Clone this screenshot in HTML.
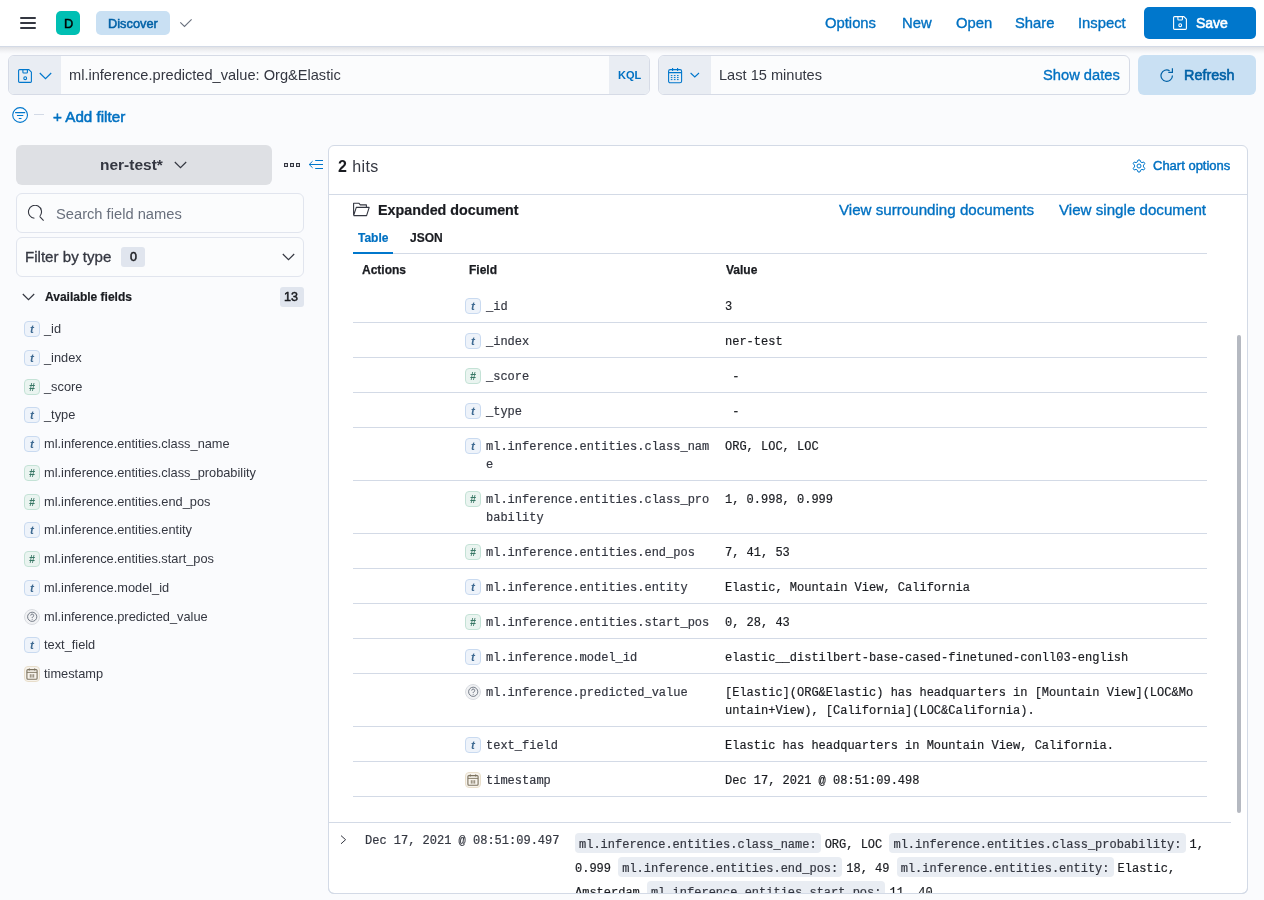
<!DOCTYPE html>
<html><head><meta charset="utf-8"><style>
*{margin:0;padding:0}
html,body{width:1264px;height:900px;overflow:hidden;background:#FAFBFD;font-family:"Liberation Sans",sans-serif;}
.t{position:absolute;white-space:nowrap;will-change:transform;}
.b{position:absolute;}
.tok{position:absolute;width:16px;height:16px;box-sizing:border-box;border-radius:4px;border:1px solid;}
.tok{will-change:transform}.tok i{position:absolute;left:0;top:0;width:14px;text-align:center;font-style:italic;font-weight:700;font-size:11px;line-height:14px;font-family:"Liberation Sans",sans-serif;}
.tt{background:#EEF3FA;border-color:#C9DAF0;}
.tt i{color:#3E6A92;font-size:11.5px;}
.tn{background:#EAF4F0;border-color:#C4E2D6;}
.tn i{color:#387765;font-family:"Liberation Sans",sans-serif;font-size:10.5px;top:-0.5px;}
.tq{background:#F1F2F4;border-color:#D9DCE1;border-radius:50%;}
.td{background:#F7F3EC;border-color:#E8DECB;}
.src{-webkit-text-stroke:0.2px #1A1C21;will-change:transform;position:absolute;font-family:"Liberation Mono",monospace;font-size:12px;line-height:24px;color:#1A1C21;height:60px;overflow:hidden;}
.dt{background:#E9EDF3;border-radius:4px;padding:5px 4px 1px;margin-right:4px;color:#343741;-webkit-text-stroke:0.2px #343741;}
.dd{}
</style></head><body>
<div class="b" style="left:0px;top:0px;width:1264px;height:46px;background:#fff;"></div>
<div class="b" style="left:0px;top:46px;width:1264px;height:1px;background:#D3DAE6;"></div>
<div class="b" style="left:0;top:47px;width:1264px;height:7px;background:linear-gradient(rgba(60,60,70,.13),rgba(60,60,70,.04) 60%,rgba(60,60,70,0));"></div>
<div class="b" style="left:20px;top:17px;width:16px;height:2px;background:#343741;border-radius:1px;"></div>
<div class="b" style="left:20px;top:22px;width:16px;height:2px;background:#343741;border-radius:1px;"></div>
<div class="b" style="left:20px;top:27px;width:16px;height:2px;background:#343741;border-radius:1px;"></div>
<div class="b" style="left:56px;top:11px;width:24px;height:24px;background:#00BFB3;border-radius:5px;"></div>
<div class="t" style="left:64px;top:15.66px;font-size:12.8px;line-height:15px;font-weight:400;color:#000;-webkit-text-stroke:0.45px #000;">D</div>
<div class="b" style="left:96px;top:11px;width:74px;height:24px;background:#C9E0F3;border-radius:5px;"></div>
<div class="t" style="left:108.4px;top:16.06px;font-size:12.8px;line-height:15px;font-weight:400;color:#0061A6;-webkit-text-stroke:0.5px #0061A6;">Discover</div>
<svg class="b" style="left:179px;top:17px" width="14" height="12" viewBox="0 0 14 12"><path d="M1.3 5.3 L5.5 9.4 L12.6 2.3" fill="none" stroke="#69707D" stroke-width="1.1"/></svg>
<div class="t" style="left:825px;top:14.47px;font-size:14.8px;line-height:18px;font-weight:400;color:#0071C2;-webkit-text-stroke:0.35px #0071C2;">Options</div>
<div class="t" style="left:902px;top:14.47px;font-size:14.8px;line-height:18px;font-weight:400;color:#0071C2;-webkit-text-stroke:0.35px #0071C2;">New</div>
<div class="t" style="left:955.6px;top:14.47px;font-size:14.8px;line-height:18px;font-weight:400;color:#0071C2;-webkit-text-stroke:0.35px #0071C2;">Open</div>
<div class="t" style="left:1015.4px;top:14.47px;font-size:14.8px;line-height:18px;font-weight:400;color:#0071C2;-webkit-text-stroke:0.35px #0071C2;">Share</div>
<div class="t" style="left:1078.3px;top:14.47px;font-size:14.8px;line-height:18px;font-weight:400;color:#0071C2;-webkit-text-stroke:0.35px #0071C2;">Inspect</div>
<div class="b" style="left:1144px;top:7px;width:112px;height:32px;background:#0077CC;border-radius:5px;"></div>
<svg class="b" style="left:1173px;top:16px" width="15" height="15" viewBox="0 0 15 15"><path d="M0.6 1.6 Q0.6 0.6 1.6 0.6 H10.9 L13.4 3.1 V12.5 Q13.4 13.4 12.5 13.4 H1.6 Q0.6 13.4 0.6 12.5 Z" fill="none" stroke="#fff" stroke-width="1.1" stroke-linejoin="round"/><path d="M4.9 0.6 V3.2 Q4.9 4 5.7 4 H8.6 Q9.4 4 9.4 3.2 V0.6" fill="none" stroke="#fff" stroke-width="1.1"/><circle cx="7.2" cy="9.2" r="1.4" fill="none" stroke="#fff" stroke-width="1.1"/></svg>
<div class="t" style="left:1196px;top:14.65px;font-size:14px;line-height:17px;font-weight:400;color:#fff;-webkit-text-stroke:0.6px #fff;">Save</div>
<div class="b" style="left:8px;top:55px;width:642px;height:40px;background:#FBFCFD;border:1px solid #D6DBE6;border-radius:6px;box-sizing:border-box;"></div>
<div class="b" style="left:9px;top:56px;width:52px;height:38px;background:#E9EDF3;border-radius:5px 0 0 5px;"></div>
<div class="b" style="left:609px;top:56px;width:40px;height:38px;background:#E9EDF3;border-radius:0 5px 5px 0;"></div>
<svg class="b" style="left:18px;top:69px" width="15" height="15" viewBox="0 0 15 15"><path d="M0.6 1.6 Q0.6 0.6 1.6 0.6 H10.9 L13.4 3.1 V12.5 Q13.4 13.4 12.5 13.4 H1.6 Q0.6 13.4 0.6 12.5 Z" fill="none" stroke="#0077CC" stroke-width="1.1" stroke-linejoin="round"/><path d="M4.9 0.6 V3.2 Q4.9 4 5.7 4 H8.6 Q9.4 4 9.4 3.2 V0.6" fill="none" stroke="#0077CC" stroke-width="1.1"/><circle cx="7.2" cy="9.2" r="1.4" fill="none" stroke="#0077CC" stroke-width="1.1"/></svg>
<svg class="b" style="left:39px;top:72px" width="13" height="8" viewBox="0 0 13 8"><path d="M0.8 1 L6.5 6.6 L12.2 1" fill="none" stroke="#0077CC" stroke-width="1.2"/></svg>
<div class="t" style="left:69.4px;top:65.94px;font-size:14.6px;line-height:18px;font-weight:400;color:#343741;">ml.inference.predicted_value: Org&amp;Elastic</div>
<div class="t" style="left:617.8px;top:69.49px;font-size:11px;line-height:13px;font-weight:700;color:#0071C2;">KQL</div>
<div class="b" style="left:658px;top:55px;width:472px;height:40px;background:#FBFCFD;border:1px solid #D6DBE6;border-radius:6px;box-sizing:border-box;"></div>
<div class="b" style="left:659px;top:56px;width:52px;height:38px;background:#E9EDF3;border-radius:5px 0 0 5px;"></div>
<svg class="b" style="left:668px;top:67px" width="15" height="17" viewBox="0 0 15 17"><rect x="0.6" y="2.6" width="13" height="13.2" rx="1.6" fill="none" stroke="#0077CC" stroke-width="1.1"/><path d="M0.6 5.6 H13.6 M4.6 1 V4 M9.6 1 V4" stroke="#0077CC" stroke-width="1.1"/><path d="M2.8 8.6 h1.6 M5.9 8.6 h1.6 M9 8.6 h1.6 M2.8 10.6 h1.6 M5.9 10.6 h1.6 M9 10.6 h1.6 M2.8 12.6 h1.6 M5.9 12.6 h1.6 M9 12.6 h1.6" stroke="#0077CC" stroke-width="1"/></svg>
<svg class="b" style="left:690px;top:72px" width="10" height="7" viewBox="0 0 10 7"><path d="M0.6 1 L4.8 5 L9 1" fill="none" stroke="#0077CC" stroke-width="1.1"/></svg>
<div class="t" style="left:719.2px;top:66.14px;font-size:14.6px;line-height:18px;font-weight:400;color:#343741;">Last 15 minutes</div>
<div class="t" style="left:1043.3px;top:65.91px;font-size:14.7px;line-height:18px;font-weight:400;color:#0071C2;-webkit-text-stroke:0.35px #0071C2;">Show dates</div>
<div class="b" style="left:1138px;top:55px;width:118px;height:40px;background:#C9E0F3;border-radius:6px;"></div>
<svg class="b" style="left:1160px;top:68px" width="14" height="14" viewBox="0 0 14 14"><path d="M9.6 2.7 A5.7 5.7 0 1 0 12.4 7.4" fill="none" stroke="#0061A6" stroke-width="1.2"/><path d="M12.4 0.2 V4.3 H8.3" fill="none" stroke="#0061A6" stroke-width="1.2"/></svg>
<div class="t" style="left:1183.6px;top:66.51px;font-size:14.4px;line-height:17px;font-weight:400;color:#0061A6;-webkit-text-stroke:0.6px #0061A6;">Refresh</div>
<svg class="b" style="left:12px;top:107px" width="17" height="17" viewBox="0 0 17 17"><circle cx="8.1" cy="8" r="7.4" fill="none" stroke="#0077CC" stroke-width="1.1"/><path d="M3.5 5.6 H12.8 M5.4 8.5 H10.9 M7.2 11.5 H9.1" stroke="#0077CC" stroke-width="1.1" stroke-linecap="round"/></svg>
<div class="b" style="left:34px;top:114px;width:10px;height:1px;background:#D3DAE6;"></div>
<div class="t" style="left:53px;top:107.83px;font-size:15.2px;line-height:18px;font-weight:400;color:#0071C2;-webkit-text-stroke:0.55px #0071C2;">+ Add filter</div>
<div class="b" style="left:16px;top:145px;width:256px;height:40px;background:#DEE0E4;border-radius:6px;"></div>
<div class="t" style="left:100.3px;top:154.63px;font-size:15.5px;line-height:19px;font-weight:700;color:#343741;">ner-test*</div>
<svg class="b" style="left:174px;top:161px" width="13" height="8" viewBox="0 0 13 8"><path d="M0.8 1 L6.5 6.6 L12.2 1" fill="none" stroke="#343741" stroke-width="1.2"/></svg>
<svg class="b" style="left:284px;top:163px" width="17" height="5" viewBox="0 0 17 5"><rect x="0.55" y="0.55" width="2.9" height="2.9" fill="none" stroke="#343741" stroke-width="1.1"/><rect x="6.55" y="0.55" width="2.9" height="2.9" fill="none" stroke="#343741" stroke-width="1.1"/><rect x="12.55" y="0.55" width="2.9" height="2.9" fill="none" stroke="#343741" stroke-width="1.1"/></svg>
<svg class="b" style="left:308px;top:158px" width="16" height="14" viewBox="0 0 16 14"><path d="M4.6 3.2 L1.2 6.5 L4.6 9.8 M1.2 6.5 H15 M7.2 2.5 H15 M7.2 10.5 H15" fill="none" stroke="#0077CC" stroke-width="1"/></svg>
<div class="b" style="left:16px;top:193px;width:288px;height:40px;background:#FBFCFD;border:1px solid #E1E5EE;border-radius:6px;box-sizing:border-box;"></div>
<svg class="b" style="left:27px;top:205px" width="18" height="17" viewBox="0 0 18 17"><path d="M7.43 13.28 A6.5 6.5 0 1 1 12.98 10.98" fill="none" stroke="#343741" stroke-width="1.1"/><path d="M12.6 11.3 L16.6 15.6" stroke="#343741" stroke-width="1.1"/></svg>
<div class="t" style="left:56.2px;top:205.11px;font-size:14.7px;line-height:18px;font-weight:400;color:#69707D;">Search field names</div>
<div class="b" style="left:16px;top:237px;width:288px;height:40px;background:#FBFCFD;border:1px solid #E1E5EE;border-radius:6px;box-sizing:border-box;"></div>
<div class="t" style="left:25.3px;top:247.97px;font-size:15.1px;line-height:18px;font-weight:400;color:#343741;-webkit-text-stroke:0.3px #343741;">Filter by type</div>
<div class="b" style="left:121px;top:247px;width:24px;height:20px;background:#E0E5EE;border-radius:3px;"></div>
<div class="t" style="left:129.5px;top:249.67px;font-size:12.5px;line-height:15px;font-weight:400;color:#1A1C21;-webkit-text-stroke:0.5px #1A1C21;">0</div>
<svg class="b" style="left:282px;top:253px" width="13" height="8" viewBox="0 0 13 8"><path d="M0.8 1 L6.5 6.6 L12.2 1" fill="none" stroke="#343741" stroke-width="1.2"/></svg>
<svg class="b" style="left:22px;top:293px" width="13" height="8" viewBox="0 0 13 8"><path d="M0.8 1 L6.5 6.6 L12.2 1" fill="none" stroke="#343741" stroke-width="1.2"/></svg>
<div class="t" style="left:44.8px;top:290.34px;font-size:12px;line-height:14px;font-weight:700;color:#1A1C21;-webkit-text-stroke:0.2px #1A1C21;">Available fields</div>
<div class="b" style="left:280px;top:287px;width:24px;height:20px;background:#E0E5EE;border-radius:3px;"></div>
<div class="t" style="left:284.3px;top:289.67px;font-size:12.5px;line-height:15px;font-weight:400;color:#1A1C21;-webkit-text-stroke:0.5px #1A1C21;">13</div>
<div class="tok tt" style="left:24px;top:321px"><i>t</i></div>
<div class="t" style="left:44px;top:321.06px;font-size:12.8px;line-height:15px;font-weight:400;color:#343741;">_id</div>
<div class="tok tt" style="left:24px;top:350px"><i>t</i></div>
<div class="t" style="left:44px;top:349.81px;font-size:12.8px;line-height:15px;font-weight:400;color:#343741;">_index</div>
<div class="tok tn" style="left:24px;top:379px"><i>#</i></div>
<div class="t" style="left:44px;top:378.56px;font-size:12.8px;line-height:15px;font-weight:400;color:#343741;">_score</div>
<div class="tok tt" style="left:24px;top:407px"><i>t</i></div>
<div class="t" style="left:44px;top:407.31px;font-size:12.8px;line-height:15px;font-weight:400;color:#343741;">_type</div>
<div class="tok tt" style="left:24px;top:436px"><i>t</i></div>
<div class="t" style="left:44px;top:436.06px;font-size:12.8px;line-height:15px;font-weight:400;color:#343741;">ml.inference.entities.class_name</div>
<div class="tok tn" style="left:24px;top:465px"><i>#</i></div>
<div class="t" style="left:44px;top:464.81px;font-size:12.8px;line-height:15px;font-weight:400;color:#343741;">ml.inference.entities.class_probability</div>
<div class="tok tn" style="left:24px;top:494px"><i>#</i></div>
<div class="t" style="left:44px;top:493.56px;font-size:12.8px;line-height:15px;font-weight:400;color:#343741;">ml.inference.entities.end_pos</div>
<div class="tok tt" style="left:24px;top:522px"><i>t</i></div>
<div class="t" style="left:44px;top:522.31px;font-size:12.8px;line-height:15px;font-weight:400;color:#343741;">ml.inference.entities.entity</div>
<div class="tok tn" style="left:24px;top:551px"><i>#</i></div>
<div class="t" style="left:44px;top:551.06px;font-size:12.8px;line-height:15px;font-weight:400;color:#343741;">ml.inference.entities.start_pos</div>
<div class="tok tt" style="left:24px;top:580px"><i>t</i></div>
<div class="t" style="left:44px;top:579.81px;font-size:12.8px;line-height:15px;font-weight:400;color:#343741;">ml.inference.model_id</div>
<div class="tok tq" style="left:24px;top:609px"><svg width="16" height="16" viewBox="0 0 16 16" style="position:absolute;left:-1px;top:-1px"><circle cx="8.2" cy="7.8" r="4.6" fill="none" stroke="#69707D" stroke-width="0.9"/><path d="M6.7 6.6 A1.5 1.5 0 1 1 8.5 8 Q8.2 8.2 8.2 9" fill="none" stroke="#69707D" stroke-width="0.9"/><circle cx="8.2" cy="10.3" r="0.5" fill="#69707D"/></svg></div>
<div class="t" style="left:44px;top:608.56px;font-size:12.8px;line-height:15px;font-weight:400;color:#343741;">ml.inference.predicted_value</div>
<div class="tok tt" style="left:24px;top:637px"><i>t</i></div>
<div class="t" style="left:44px;top:637.31px;font-size:12.8px;line-height:15px;font-weight:400;color:#343741;">text_field</div>
<div class="tok td" style="left:24px;top:666px"><svg width="16" height="16" viewBox="0 0 16 16" style="position:absolute;left:-1px;top:-1px"><rect x="2.9" y="3.6" width="10.2" height="9.6" rx="1" fill="none" stroke="#7C7360" stroke-width="1.1"/><path d="M2.9 6.4 H13.1 M5.3 2.3 V4.6 M10.7 2.3 V4.6 M6.3 8.2 V11.6 M8 8.2 V11.6 M9.7 8.2 V11.6" stroke="#7C7360" stroke-width="0.9"/></svg></div>
<div class="t" style="left:44px;top:666.06px;font-size:12.8px;line-height:15px;font-weight:400;color:#343741;">timestamp</div>
<div class="b" style="left:328px;top:145px;width:920px;height:749px;background:#fff;border:1px solid #D3DAE6;border-radius:6px;box-sizing:border-box;"></div>
<div class="b" style="left:329px;top:194px;width:918px;height:1px;background:#D3DAE6;"></div>
<div class="t" style="left:337.5px;top:157.26px;font-size:16px;line-height:19px;font-weight:400;color:#343741;letter-spacing:0.4px;"><b style="font-weight:700;color:#1A1C21">2</b> hits</div>
<svg class="b" style="left:1132px;top:159px" width="14" height="14" viewBox="0 0 14 14"><g fill="none" stroke="#0077CC" stroke-width="1"><circle cx="7" cy="7" r="2"/><path d="M6 1 H8 L8.5 2.8 L10 3.6 L11.8 3 L12.8 4.7 L11.5 6.1 V7.9 L12.8 9.3 L11.8 11 L10 10.4 L8.5 11.2 L8 13 H6 L5.5 11.2 L4 10.4 L2.2 11 L1.2 9.3 L2.5 7.9 V6.1 L1.2 4.7 L2.2 3 L4 3.6 L5.5 2.8 Z"/></g></svg>
<div class="t" style="left:1153px;top:158.10px;font-size:13px;line-height:16px;font-weight:400;color:#0071C2;-webkit-text-stroke:0.45px #0071C2;">Chart options</div>
<div class="b" style="left:1237px;top:335px;width:4px;height:478px;background:#B5B9C1;border-radius:2px;"></div>
<svg class="b" style="left:353px;top:202px" width="17" height="15" viewBox="0 0 17 15"><path d="M0.6 13.6 V1.2 H5.8 L7.3 2.9 H13.4 V5.4 M0.6 13.6 H13.6 L16.2 5.4 H3.3 L0.6 13.6" fill="none" stroke="#343741" stroke-width="1.1" stroke-linejoin="round"/></svg>
<div class="t" style="left:377.5px;top:201.55px;font-size:14.3px;line-height:17px;font-weight:700;color:#1A1C21;-webkit-text-stroke:0.2px #1A1C21;">Expanded document</div>
<div class="t" style="left:839.3px;top:201.15px;font-size:15.15px;line-height:18px;font-weight:400;color:#0071C2;-webkit-text-stroke:0.35px #0071C2;">View surrounding documents</div>
<div class="t" style="left:1059.3px;top:201.15px;font-size:15.15px;line-height:18px;font-weight:400;color:#0071C2;-webkit-text-stroke:0.35px #0071C2;">View single document</div>
<div class="t" style="left:357.6px;top:230.94px;font-size:12px;line-height:14px;font-weight:700;color:#0071C2;-webkit-text-stroke:0.2px #0071C2;">Table</div>
<div class="t" style="left:409.6px;top:230.94px;font-size:12px;line-height:14px;font-weight:700;color:#1A1C21;-webkit-text-stroke:0.2px #1A1C21;">JSON</div>
<div class="b" style="left:353px;top:253px;width:854px;height:1px;background:#D3DAE6;"></div>
<div class="b" style="left:353px;top:252px;width:40px;height:2px;background:#0077CC;"></div>
<div class="t" style="left:361.8px;top:263.04px;font-size:12px;line-height:14px;font-weight:700;color:#1A1C21;-webkit-text-stroke:0.25px #1A1C21;">Actions</div>
<div class="t" style="left:469.3px;top:263.04px;font-size:12px;line-height:14px;font-weight:700;color:#1A1C21;-webkit-text-stroke:0.25px #1A1C21;">Field</div>
<div class="t" style="left:725.7px;top:263.04px;font-size:12px;line-height:14px;font-weight:700;color:#1A1C21;-webkit-text-stroke:0.25px #1A1C21;">Value</div>
<div class="tok tt" style="left:465px;top:298px"><i>t</i></div>
<div class="t" style="left:485.6px;top:298.11px;font-size:12px;line-height:18px;font-weight:400;color:#343741;font-family:'Liberation Mono', monospace;-webkit-text-stroke:0.2px #343741;white-space:nowrap;">_id</div>
<div class="t" style="left:724.8px;top:298.11px;font-size:12px;line-height:18px;font-weight:400;color:#1A1C21;font-family:'Liberation Mono', monospace;-webkit-text-stroke:0.2px #1A1C21;white-space:pre;">3</div>
<div class="b" style="left:353px;top:322px;width:854px;height:1px;background:#D3DAE6;"></div>
<div class="tok tt" style="left:465px;top:333px"><i>t</i></div>
<div class="t" style="left:485.6px;top:333.11px;font-size:12px;line-height:18px;font-weight:400;color:#343741;font-family:'Liberation Mono', monospace;-webkit-text-stroke:0.2px #343741;white-space:nowrap;">_index</div>
<div class="t" style="left:724.8px;top:333.11px;font-size:12px;line-height:18px;font-weight:400;color:#1A1C21;font-family:'Liberation Mono', monospace;-webkit-text-stroke:0.2px #1A1C21;white-space:pre;">ner-test</div>
<div class="b" style="left:353px;top:357px;width:854px;height:1px;background:#D3DAE6;"></div>
<div class="tok tn" style="left:465px;top:368px"><i>#</i></div>
<div class="t" style="left:485.6px;top:368.11px;font-size:12px;line-height:18px;font-weight:400;color:#343741;font-family:'Liberation Mono', monospace;-webkit-text-stroke:0.2px #343741;white-space:nowrap;">_score</div>
<div class="t" style="left:724.8px;top:368.11px;font-size:12px;line-height:18px;font-weight:400;color:#1A1C21;font-family:'Liberation Mono', monospace;-webkit-text-stroke:0.2px #1A1C21;white-space:pre;"> -</div>
<div class="b" style="left:353px;top:392px;width:854px;height:1px;background:#D3DAE6;"></div>
<div class="tok tt" style="left:465px;top:403px"><i>t</i></div>
<div class="t" style="left:485.6px;top:403.11px;font-size:12px;line-height:18px;font-weight:400;color:#343741;font-family:'Liberation Mono', monospace;-webkit-text-stroke:0.2px #343741;white-space:nowrap;">_type</div>
<div class="t" style="left:724.8px;top:403.11px;font-size:12px;line-height:18px;font-weight:400;color:#1A1C21;font-family:'Liberation Mono', monospace;-webkit-text-stroke:0.2px #1A1C21;white-space:pre;"> -</div>
<div class="b" style="left:353px;top:427px;width:854px;height:1px;background:#D3DAE6;"></div>
<div class="tok tt" style="left:465px;top:438px"><i>t</i></div>
<div class="t" style="left:485.6px;top:438.11px;font-size:12px;line-height:18px;font-weight:400;color:#343741;font-family:'Liberation Mono', monospace;-webkit-text-stroke:0.2px #343741;white-space:nowrap;">ml.inference.entities.class_nam<br>e</div>
<div class="t" style="left:724.8px;top:438.11px;font-size:12px;line-height:18px;font-weight:400;color:#1A1C21;font-family:'Liberation Mono', monospace;-webkit-text-stroke:0.2px #1A1C21;white-space:pre;">ORG, LOC, LOC</div>
<div class="b" style="left:353px;top:480px;width:854px;height:1px;background:#D3DAE6;"></div>
<div class="tok tn" style="left:465px;top:491px"><i>#</i></div>
<div class="t" style="left:485.6px;top:491.11px;font-size:12px;line-height:18px;font-weight:400;color:#343741;font-family:'Liberation Mono', monospace;-webkit-text-stroke:0.2px #343741;white-space:nowrap;">ml.inference.entities.class_pro<br>bability</div>
<div class="t" style="left:724.8px;top:491.11px;font-size:12px;line-height:18px;font-weight:400;color:#1A1C21;font-family:'Liberation Mono', monospace;-webkit-text-stroke:0.2px #1A1C21;white-space:pre;">1, 0.998, 0.999</div>
<div class="b" style="left:353px;top:533px;width:854px;height:1px;background:#D3DAE6;"></div>
<div class="tok tn" style="left:465px;top:544px"><i>#</i></div>
<div class="t" style="left:485.6px;top:544.11px;font-size:12px;line-height:18px;font-weight:400;color:#343741;font-family:'Liberation Mono', monospace;-webkit-text-stroke:0.2px #343741;white-space:nowrap;">ml.inference.entities.end_pos</div>
<div class="t" style="left:724.8px;top:544.11px;font-size:12px;line-height:18px;font-weight:400;color:#1A1C21;font-family:'Liberation Mono', monospace;-webkit-text-stroke:0.2px #1A1C21;white-space:pre;">7, 41, 53</div>
<div class="b" style="left:353px;top:568px;width:854px;height:1px;background:#D3DAE6;"></div>
<div class="tok tt" style="left:465px;top:579px"><i>t</i></div>
<div class="t" style="left:485.6px;top:579.11px;font-size:12px;line-height:18px;font-weight:400;color:#343741;font-family:'Liberation Mono', monospace;-webkit-text-stroke:0.2px #343741;white-space:nowrap;">ml.inference.entities.entity</div>
<div class="t" style="left:724.8px;top:579.11px;font-size:12px;line-height:18px;font-weight:400;color:#1A1C21;font-family:'Liberation Mono', monospace;-webkit-text-stroke:0.2px #1A1C21;white-space:pre;">Elastic, Mountain View, California</div>
<div class="b" style="left:353px;top:603px;width:854px;height:1px;background:#D3DAE6;"></div>
<div class="tok tn" style="left:465px;top:614px"><i>#</i></div>
<div class="t" style="left:485.6px;top:614.11px;font-size:12px;line-height:18px;font-weight:400;color:#343741;font-family:'Liberation Mono', monospace;-webkit-text-stroke:0.2px #343741;white-space:nowrap;">ml.inference.entities.start_pos</div>
<div class="t" style="left:724.8px;top:614.11px;font-size:12px;line-height:18px;font-weight:400;color:#1A1C21;font-family:'Liberation Mono', monospace;-webkit-text-stroke:0.2px #1A1C21;white-space:pre;">0, 28, 43</div>
<div class="b" style="left:353px;top:638px;width:854px;height:1px;background:#D3DAE6;"></div>
<div class="tok tt" style="left:465px;top:649px"><i>t</i></div>
<div class="t" style="left:485.6px;top:649.11px;font-size:12px;line-height:18px;font-weight:400;color:#343741;font-family:'Liberation Mono', monospace;-webkit-text-stroke:0.2px #343741;white-space:nowrap;">ml.inference.model_id</div>
<div class="t" style="left:724.8px;top:649.11px;font-size:12px;line-height:18px;font-weight:400;color:#1A1C21;font-family:'Liberation Mono', monospace;-webkit-text-stroke:0.2px #1A1C21;white-space:pre;">elastic__distilbert-base-cased-finetuned-conll03-english</div>
<div class="b" style="left:353px;top:673px;width:854px;height:1px;background:#D3DAE6;"></div>
<div class="tok tq" style="left:465px;top:684px"><svg width="16" height="16" viewBox="0 0 16 16" style="position:absolute;left:-1px;top:-1px"><circle cx="8.2" cy="7.8" r="4.6" fill="none" stroke="#69707D" stroke-width="0.9"/><path d="M6.7 6.6 A1.5 1.5 0 1 1 8.5 8 Q8.2 8.2 8.2 9" fill="none" stroke="#69707D" stroke-width="0.9"/><circle cx="8.2" cy="10.3" r="0.5" fill="#69707D"/></svg></div>
<div class="t" style="left:485.6px;top:684.11px;font-size:12px;line-height:18px;font-weight:400;color:#343741;font-family:'Liberation Mono', monospace;-webkit-text-stroke:0.2px #343741;white-space:nowrap;">ml.inference.predicted_value</div>
<div class="t" style="left:724.8px;top:684.11px;font-size:12px;line-height:18px;font-weight:400;color:#1A1C21;font-family:'Liberation Mono', monospace;-webkit-text-stroke:0.2px #1A1C21;white-space:pre;">[Elastic](ORG&amp;Elastic) has headquarters in [Mountain View](LOC&amp;Mo<br>untain+View), [California](LOC&amp;California).</div>
<div class="b" style="left:353px;top:726px;width:854px;height:1px;background:#D3DAE6;"></div>
<div class="tok tt" style="left:465px;top:737px"><i>t</i></div>
<div class="t" style="left:485.6px;top:737.11px;font-size:12px;line-height:18px;font-weight:400;color:#343741;font-family:'Liberation Mono', monospace;-webkit-text-stroke:0.2px #343741;white-space:nowrap;">text_field</div>
<div class="t" style="left:724.8px;top:737.11px;font-size:12px;line-height:18px;font-weight:400;color:#1A1C21;font-family:'Liberation Mono', monospace;-webkit-text-stroke:0.2px #1A1C21;white-space:pre;">Elastic has headquarters in Mountain View, California.</div>
<div class="b" style="left:353px;top:761px;width:854px;height:1px;background:#D3DAE6;"></div>
<div class="tok td" style="left:465px;top:772px"><svg width="16" height="16" viewBox="0 0 16 16" style="position:absolute;left:-1px;top:-1px"><rect x="2.9" y="3.6" width="10.2" height="9.6" rx="1" fill="none" stroke="#7C7360" stroke-width="1.1"/><path d="M2.9 6.4 H13.1 M5.3 2.3 V4.6 M10.7 2.3 V4.6 M6.3 8.2 V11.6 M8 8.2 V11.6 M9.7 8.2 V11.6" stroke="#7C7360" stroke-width="0.9"/></svg></div>
<div class="t" style="left:485.6px;top:772.11px;font-size:12px;line-height:18px;font-weight:400;color:#343741;font-family:'Liberation Mono', monospace;-webkit-text-stroke:0.2px #343741;white-space:nowrap;">timestamp</div>
<div class="t" style="left:724.8px;top:772.11px;font-size:12px;line-height:18px;font-weight:400;color:#1A1C21;font-family:'Liberation Mono', monospace;-webkit-text-stroke:0.2px #1A1C21;white-space:pre;">Dec 17, 2021 @ 08:51:09.498</div>
<div class="b" style="left:353px;top:796px;width:854px;height:1px;background:#D3DAE6;"></div>
<div class="b" style="left:329px;top:822px;width:902px;height:1px;background:#D3DAE6;"></div>
<svg class="b" style="left:340px;top:835px" width="7" height="10" viewBox="0 0 7 10"><path d="M1 0.6 L5.6 4.7 L1 8.8" fill="none" stroke="#343741" stroke-width="1"/></svg>
<div class="t" style="left:365.1px;top:834.41px;font-size:12px;line-height:14px;font-weight:400;color:#343741;font-family:'Liberation Mono', monospace;-webkit-text-stroke:0.2px #343741;">Dec 17, 2021 @ 08:51:09.497</div>
<div class="src" style="left:575px;top:833px;width:640px;">
<span class="dt">ml.inference.entities.class_name:</span><span class="dd">ORG, LOC</span> <span class="dt">ml.inference.entities.class_probability:</span><span class="dd">1, 0.999</span> <span class="dt">ml.inference.entities.end_pos:</span><span class="dd">18, 49</span> <span class="dt">ml.inference.entities.entity:</span><span class="dd">Elastic, Amsterdam</span> <span class="dt">ml.inference.entities.start_pos:</span><span class="dd">11, 40</span>
</div>
<div class="b" style="left:0px;top:894px;width:1264px;height:6px;background:#FAFBFD;"></div>
<div class="b" style="left:328px;top:885px;width:920px;height:9px;border:1px solid #D3DAE6;border-top:none;border-radius:0 0 6px 6px;box-sizing:border-box;background:transparent;"></div>
</body></html>
